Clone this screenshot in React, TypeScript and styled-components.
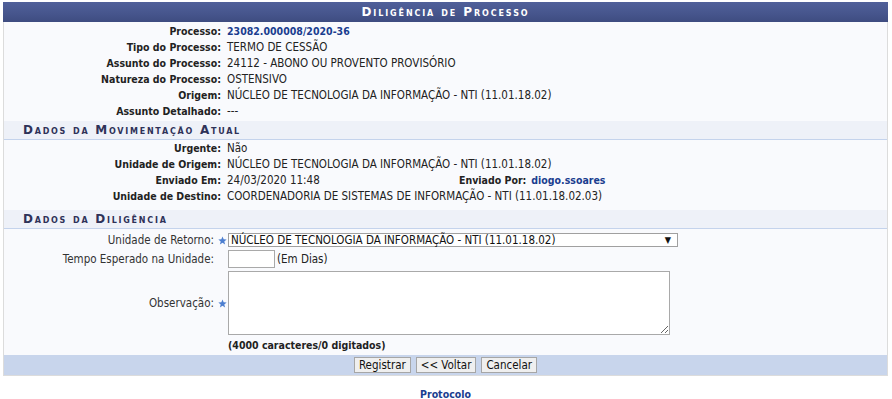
import React from "react";
import styled, { createGlobalStyle } from "styled-components";

const GlobalStyle = createGlobalStyle`
  body {
    margin: 0;
    background: #ffffff;
    font-family: "DejaVu Sans Condensed", "DejaVu Sans", Verdana, sans-serif;
    font-size: 11.5px;
    color: #222222;
  }
`;

const Page = styled.div`
  padding: 2px 4px 0 3px;
`;

const Form = styled.div`
  border: 1px solid #dcdcdc;
  border-top: none;
  background: #f9fafd;
`;

const Caption = styled.div`
  height: 20px;
  line-height: 20px;
  background: linear-gradient(#50609a, #46558c 60%, #3e4c80);
  color: #ffffff;
  font-family: "DejaVu Sans", Verdana, sans-serif;
  font-weight: bold;
  font-variant: small-caps;
  letter-spacing: 1.9px;
  font-size: 12px;
  text-align: center;
`;

const InfoGrid = styled.div<{ $top?: number }>`
  display: grid;
  grid-template-columns: 220px 1fr;
  padding-top: ${(p) => p.$top ?? 0}px;
`;

const Label = styled.div`
  text-align: right;
  padding-right: 3px;
  font-weight: bold;
  font-size: 10.5px;
  color: #222222;
  line-height: 16px;
  white-space: nowrap;
`;

const Value = styled.div`
  padding-left: 3px;
  line-height: 16px;
  white-space: nowrap;
`;

const Link = styled.span`
  color: #1a3d8f;
  font-weight: bold;
  font-size: 10.5px;
`;

const SectionHeader = styled.div<{ $top: number }>`
  margin-top: ${(p) => p.$top}px;
  height: 18px;
  line-height: 19px;
  background: #eef1f8;
  border-bottom: 1px solid #c4d3ec;
  padding-left: 19px;
  font-family: "DejaVu Sans", Verdana, sans-serif;
  font-weight: bold;
  font-variant: small-caps;
  letter-spacing: 1.75px;
  font-size: 12px;
  color: #2e3258;
`;

const SplitValue = styled.div`
  display: grid;
  grid-template-columns: 227px auto 1fr;
  column-gap: 5px;
`;

const SubLabel = styled.b`
  font-size: 10.5px;
`;

const FieldGrid = styled.div`
  display: grid;
  grid-template-columns: 224px 1fr;
  row-gap: 3px;
  padding-top: 4px;
  align-items: center;
`;

const FieldLabel = styled.div`
  display: flex;
  justify-content: flex-end;
  align-items: center;
  gap: 4px;
  padding-right: 1px;
  color: #333333;
  white-space: nowrap;
`;

const StarBox = styled.span<{ $show: boolean }>`
  width: 9px;
  height: 9px;
  display: inline-flex;
  visibility: ${(p) => (p.$show ? "visible" : "hidden")};
`;

const SelectBox = styled.div`
  width: 440px;
  height: 12px;
  border: 1px solid #a0a0a0;
  background: #ffffff;
  display: flex;
  align-items: center;
  justify-content: space-between;
  padding: 0 6px 0 2px;
  line-height: 12px;
  color: #111111;
  box-sizing: content-box;
`;

const Arrow = styled.span`
  font-size: 9px;
`;

const Inline = styled.div`
  display: flex;
  align-items: center;
  gap: 2px;
`;

const NumberInput = styled.input`
  width: 43px;
  height: 16px;
  border: 1px solid #a9a9a9;
  padding: 0 1px;
  margin: 0;
  box-sizing: content-box;
  font: inherit;
`;

const TextArea = styled.textarea`
  width: 436px;
  height: 58px;
  border: 1px solid #a9a9a9;
  padding: 2px;
  margin: 0;
  display: block;
  font: inherit;
  box-sizing: content-box;
`;

const Counter = styled.div`
  font-weight: bold;
  font-size: 10.5px;
  padding: 2px 0 0 224px;
  line-height: 16px;
`;

const Footer = styled.div`
  margin-top: 2px;
  background: #c8d5ec;
  height: 20px;
  display: flex;
  justify-content: center;
  align-items: center;
  gap: 5px;
`;

const Button = styled.button`
  height: 16px;
  padding: 0 4px;
  border: 1px solid #a6a6a6;
  background: #efefef;
  font-family: "DejaVu Sans Condensed", "DejaVu Sans", Verdana, sans-serif;
  font-size: 11.5px;
  color: #111111;
  line-height: 14px;
`;

const BottomLink = styled.div`
  text-align: center;
  margin-top: 11px;
  font-weight: bold;
  font-size: 10.5px;
  line-height: 14px;
  color: #1a3d8f;
`;

const Star = ({ show = true }: { show?: boolean }) => (
  <StarBox $show={show}>
    <svg width="9" height="9" viewBox="0 0 10 10">
      <polygon
        points="5,0.5 6.3,3.6 9.6,3.8 7,6 7.9,9.4 5,7.5 2.1,9.4 3,6 0.4,3.8 3.7,3.6"
        fill="#4d7fd0"
      />
    </svg>
  </StarBox>
);

const processo: [string, React.ReactNode][] = [
  ["Processo:", <Link>23082.000008/2020-36</Link>],
  ["Tipo do Processo:", "TERMO DE CESSÃO"],
  ["Assunto do Processo:", "24112 - ABONO OU PROVENTO PROVISÓRIO"],
  ["Natureza do Processo:", "OSTENSIVO"],
  ["Origem:", "NÚCLEO DE TECNOLOGIA DA INFORMAÇÃO - NTI (11.01.18.02)"],
  ["Assunto Detalhado:", "---"],
];

export default function App() {
  return (
    <Page>
      <GlobalStyle />
      <Caption>Diligência de Processo</Caption>
      <Form>
        <InfoGrid $top={1}>
          {processo.map(([label, value], idx) => (
            <React.Fragment key={idx}>
              <Label>{label}</Label>
              <Value>{value}</Value>
            </React.Fragment>
          ))}
        </InfoGrid>

        <SectionHeader $top={2}>Dados da Movimentação Atual</SectionHeader>
        <InfoGrid>
          <Label>Urgente:</Label>
          <Value>Não</Value>
          <Label>Unidade de Origem:</Label>
          <Value>NÚCLEO DE TECNOLOGIA DA INFORMAÇÃO - NTI (11.01.18.02)</Value>
          <Label>Enviado Em:</Label>
          <Value>
            <SplitValue>
              <span>24/03/2020 11:48</span>
              <SubLabel>Enviado Por:</SubLabel>
              <Link>diogo.ssoares</Link>
            </SplitValue>
          </Value>
          <Label>Unidade de Destino:</Label>
          <Value>COORDENADORIA DE SISTEMAS DE INFORMAÇÃO - NTI (11.01.18.02.03)</Value>
        </InfoGrid>

        <SectionHeader $top={6}>Dados da Diligência</SectionHeader>
        <FieldGrid>
          <FieldLabel>
            Unidade de Retorno: <Star />
          </FieldLabel>
          <SelectBox>
            <span>NÚCLEO DE TECNOLOGIA DA INFORMAÇÃO - NTI (11.01.18.02)</span>
            <Arrow>▼</Arrow>
          </SelectBox>
          <FieldLabel>
            Tempo Esperado na Unidade: <Star show={false} />
          </FieldLabel>
          <Inline>
            <NumberInput type="text" />
            <span>(Em Dias)</span>
          </Inline>
          <FieldLabel>
            Observação: <Star />
          </FieldLabel>
          <TextArea />
        </FieldGrid>
        <Counter>(4000 caracteres/0 digitados)</Counter>
        <Footer>
          <Button>Registrar</Button>
          <Button>&lt;&lt; Voltar</Button>
          <Button>Cancelar</Button>
        </Footer>
      </Form>
      <BottomLink>Protocolo</BottomLink>
    </Page>
  );
}
